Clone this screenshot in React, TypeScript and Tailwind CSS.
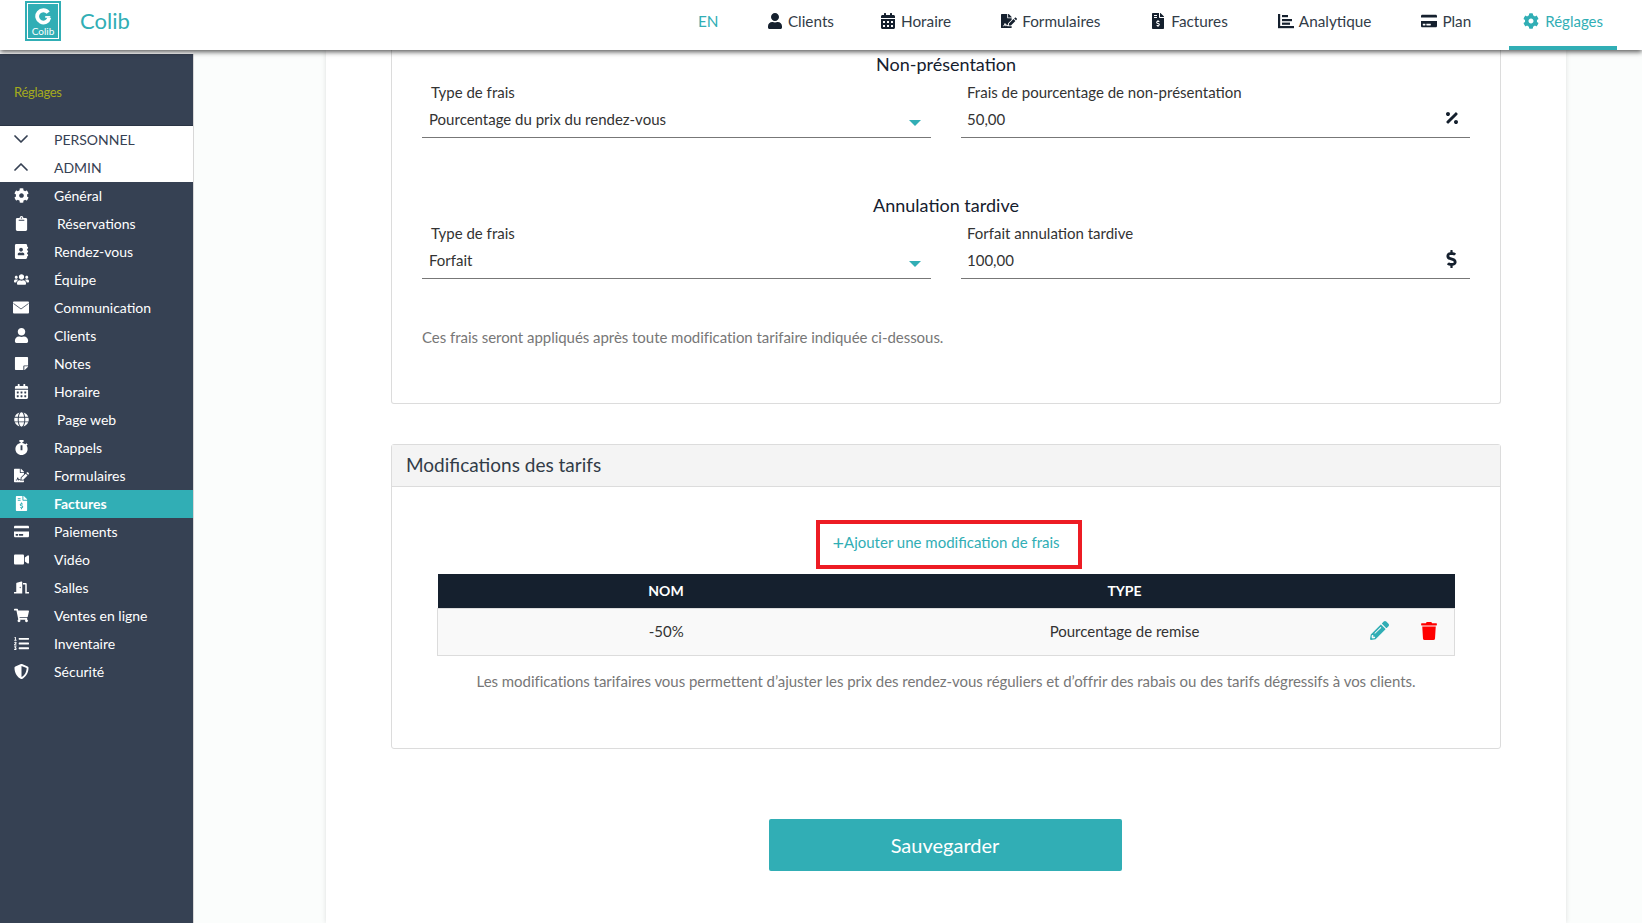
import { ChevronDown, ChevronUp } from 'lucide-react';
import {
  FaUser, FaCalendarAlt, FaFileSignature, FaFileInvoiceDollar, FaCreditCard, FaCog,
  FaClipboard, FaAddressBook, FaUsers, FaStickyNote, FaGlobe, FaStopwatch, FaDoorOpen,
  FaShoppingCart, FaListOl, FaShieldAlt, FaVideo, FaPencilAlt, FaTrash, FaPercentage, FaDollarSign,
} from 'react-icons/fa';

function ChartIcon({ className }: { className?: string }) {
  return (
    <svg viewBox="0 0 16 16" className={className} fill="currentColor">
      <rect x="0" y="1" width="2.2" height="14" />
      <rect x="0" y="13" width="16" height="2.2" />
      <rect x="4" y="2" width="6" height="2.2" />
      <rect x="4" y="6" width="10" height="2.2" />
      <rect x="4" y="9.6" width="8" height="2.2" />
    </svg>
  );
}

function MailIcon({ className }: { className?: string }) {
  return (
    <svg viewBox="0 0 16 15" className={className}>
      <rect y="1.5" width="16" height="12" rx="1" fill="currentColor" />
      <path d="M0.5 3.5 8 9 15.5 3.5" fill="none" stroke="#364153" strokeWidth="0.8" />
    </svg>
  );
}

const nav = [
  { icon: FaUser, label: 'Clients', extra: '-mr-[4px]' },
  { icon: FaCalendarAlt, label: 'Horaire', extra: '' },
  { icon: FaFileSignature, label: 'Formulaires', extra: '' },
  { icon: FaFileInvoiceDollar, label: 'Factures', extra: '' },
  { icon: ChartIcon, label: 'Analytique', extra: '' },
  { icon: FaCreditCard, label: 'Plan', extra: 'mr-[2px]' },
];

const menu = [
  { icon: FaCog, label: 'Général' },
  { icon: FaClipboard, label: 'Réservations', indent: true },
  { icon: FaAddressBook, label: 'Rendez-vous' },
  { icon: FaUsers, label: 'Équipe' },
  { icon: MailIcon, label: 'Communication' },
  { icon: FaUser, label: 'Clients' },
  { icon: FaStickyNote, label: 'Notes' },
  { icon: FaCalendarAlt, label: 'Horaire' },
  { icon: FaGlobe, label: 'Page web', indent: true },
  { icon: FaStopwatch, label: 'Rappels' },
  { icon: FaFileSignature, label: 'Formulaires' },
  { icon: FaFileInvoiceDollar, label: 'Factures', active: true },
  { icon: FaCreditCard, label: 'Paiements' },
  { icon: FaVideo, label: 'Vidéo' },
  { icon: FaDoorOpen, label: 'Salles' },
  { icon: FaShoppingCart, label: 'Ventes en ligne' },
  { icon: FaListOl, label: 'Inventaire' },
  { icon: FaShieldAlt, label: 'Sécurité' },
];

function Logo() {
  return (
    <div className="w-[36px] h-[40px] bg-[#31aeb5] p-[2px]">
      <div className="w-full h-full border border-white flex flex-col items-center pt-[4px]">
        <svg viewBox="0 0 20 20" className="w-[17px] h-[17px]">
          <path d="M15.5 5.5A7.2 7.2 0 1 0 16.8 11.5" fill="none" stroke="white" strokeWidth="4.5" />
          <path d="M12 10.5H18" stroke="white" strokeWidth="2" />
        </svg>
        <span className="text-[10px] leading-[11px] text-white mt-[1px]">Colib</span>
      </div>
    </div>
  );
}

function Header() {
  return (
    <header className="relative z-10 h-[50px] shrink-0 bg-white flex items-start justify-between shadow-[0_2px_5px_rgba(0,0,0,0.65)]">
      <div className="flex items-center pl-[25px] pt-[1px]">
        <Logo />
        <span className="ml-[19px] text-[22px] leading-[40px] text-[#31aeb5]">Colib</span>
      </div>
      <nav className="flex items-stretch h-[50px] pr-[25px] gap-[22px] text-[15.3px] text-[#323c48]">
        <div className="flex items-center px-[14px] pb-[8px] text-[#31aeb5] w-[47px]">EN</div>
        {nav.map((item) => {
          const Icon = item.icon;
          return (
            <div key={item.label} className={`flex items-center gap-[5px] px-[14px] pb-[8px] ${item.extra}`}>
              <Icon className="h-[16px] w-auto text-[#15202e]" />
              {item.label}
            </div>
          );
        })}
        <div className="flex items-center gap-[6px] px-[14px] pb-[4px] text-[15px] text-[#31aeb5] border-b-4 border-[#31aeb5]">
          <FaCog className="w-[16px] h-[16px]" />
          Réglages
        </div>
      </nav>
    </header>
  );
}

function Sidebar() {
  return (
    <aside className="w-[194px] shrink-0 mt-[4px] bg-white border-r border-[#d8d8d8] flex flex-col text-[14px]">
      <div className="h-[72px] shrink-0 bg-[#364153] border-b border-[#2a3444] flex items-center pl-[14px] pt-[6px] text-[13px] tracking-[-0.3px] text-[#a5ab1c]">
        Réglages
      </div>
      <div className="h-[28px] flex items-center pb-[2px] text-[#364153]">
        <span className="w-[42px] flex justify-center"><ChevronDown strokeWidth={1.75} className="w-[24px] h-[24px]" /></span>
        <span className="ml-[12px]">PERSONNEL</span>
      </div>
      <div className="h-[28px] flex items-center pb-[2px] text-[#364153]">
        <span className="w-[42px] flex justify-center"><ChevronUp strokeWidth={1.75} className="w-[24px] h-[24px]" /></span>
        <span className="ml-[12px]">ADMIN</span>
      </div>
      <div className="flex-1 bg-[#364153] text-white">
        {menu.map((item) => {
          const Icon = item.icon;
          return (
            <div key={item.label} className={`h-[28px] flex items-center pb-[2px] ${item.active ? 'bg-[#31aeb5] font-bold' : ''}`}>
              <span className="w-[42px] flex justify-center"><Icon className="h-[15px] w-auto max-w-[20px]" /></span>
              <span className={item.indent ? 'ml-[15px]' : 'ml-[12px]'}>{item.label}</span>
            </div>
          );
        })}
      </div>
    </aside>
  );
}

function Field({ label, value, icon, select }: { label: string; value: string; icon?: React.ReactNode; select?: boolean }) {
  return (
    <div className="flex-1">
      <div className={`h-[24px] flex items-center ${select ? 'pl-[9px]' : 'pl-[6px]'} text-[#333]`}>{label}</div>
      <div className={`h-[34px] flex items-center justify-between border-b border-[#777] pb-[3px] ${select ? 'pl-[7px] pr-[10px]' : 'pl-[6px] pr-[10px]'} text-[#333]`}>
        {value}
        {select ? (
          <svg viewBox="0 0 12 6" className="w-[12px] h-[6px] mt-[7px]"><polygon points="0,0 12,0 6,6" fill="#31aeb5" /></svg>
        ) : icon}
      </div>
    </div>
  );
}

function FeeBlock({ title, children }: { title: string; children: React.ReactNode }) {
  return (
    <div>
      <div className="h-[28px] mb-[2px] flex items-center justify-center text-[18px] text-[#15202e]">{title}</div>
      <div className="flex gap-[30px]">{children}</div>
    </div>
  );
}

export default function App() {
  return (
    <div className="h-[923px] overflow-hidden flex flex-col bg-white text-[15px] font-['Lato',sans-serif]">
      <Header />
      <div className="flex flex-1 min-h-0">
        <Sidebar />
        <main className="flex-1 bg-[#fbfdfc] pl-[132px]">
          <div className="w-[1240px] h-full bg-white shadow-[0_0_5px_rgba(0,0,0,0.12)] px-[65px]">
            <section className="h-[354px] border border-t-0 border-[#dcdcdc] rounded-b-[3px] px-[30px]">
              <FeeBlock title="Non-présentation">
                <Field select label="Type de frais" value="Pourcentage du prix du rendez-vous" />
                <Field
                  label="Frais de pourcentage de non-présentation"
                  value="50,00"
                  icon={<FaPercentage className="w-[16px] h-[16px] text-[#15202e] -mt-[3px]" />}
                />
              </FeeBlock>
              <div className="mt-[53px]">
                <FeeBlock title="Annulation tardive">
                  <Field select label="Type de frais" value="Forfait" />
                  <Field
                    label="Forfait annulation tardive"
                    value="100,00"
                    icon={<FaDollarSign className="w-[17px] h-[18px] text-[#15202e] -mt-[2px]" />}
                  />
                </FeeBlock>
              </div>
              <p className="mt-[47px] tracking-[-0.04px] text-[#777]">Ces frais seront appliqués après toute modification tarifaire indiquée ci-dessous.</p>
            </section>

            <section className="mt-[40px] h-[305px] border border-[#dcdcdc] rounded-[3px] flex flex-col">
              <div className="h-[42px] shrink-0 bg-[#f4f4f4] border-b border-[#dcdcdc] flex items-center pl-[14px] text-[19px] text-[#323c48]">
                Modifications des tarifs
              </div>
              <div className="pl-[45px] pr-[45px] pt-[33px]">
                <div className="pl-[379px]">
                  <button className="w-[266px] h-[49px] border-4 border-[#ed1c24] text-[#31aeb5] flex items-center justify-center pb-[5px] pr-[6px]">
                    <span className="text-[20px] leading-none">+</span>Ajouter une modification de frais
                  </button>
                </div>
                <table className="mt-[5px] w-[1018px] table-fixed border-collapse">
                  <thead>
                    <tr className="h-[34px] bg-[#15202e] text-white text-[14px] font-bold">
                      <th className="w-[457px] font-bold">NOM</th>
                      <th className="w-[460px] font-bold">TYPE</th>
                      <th />
                    </tr>
                  </thead>
                  <tbody>
                    <tr className="h-[47px] bg-[#f9f9f9] border border-[#dcdcdc] text-[#333] text-center">
                      <td>-50%</td>
                      <td>Pourcentage de remise</td>
                      <td>
                        <div className="flex items-center justify-end gap-[32px] pr-[17px] -mt-[2px]">
                          <FaPencilAlt className="w-[19px] h-[19px] text-[#31aeb5]" />
                          <FaTrash className="w-[16px] h-[18px] text-[#ff0000]" />
                        </div>
                      </td>
                    </tr>
                  </tbody>
                </table>
                <p className="mt-[14px] text-center tracking-[-0.04px] text-[#777]">
                  Les modifications tarifaires vous permettent d’ajuster les prix des rendez-vous réguliers et d’offrir des rabais ou des tarifs dégressifs à vos clients.
                </p>
              </div>
            </section>

            <div className="mt-[70px] flex justify-center pr-[2px]">
              <button className="w-[353px] h-[52px] bg-[#31aeb5] rounded-[2px] text-white text-[20px]">Sauvegarder</button>
            </div>
          </div>
        </main>
      </div>
    </div>
  );
}
